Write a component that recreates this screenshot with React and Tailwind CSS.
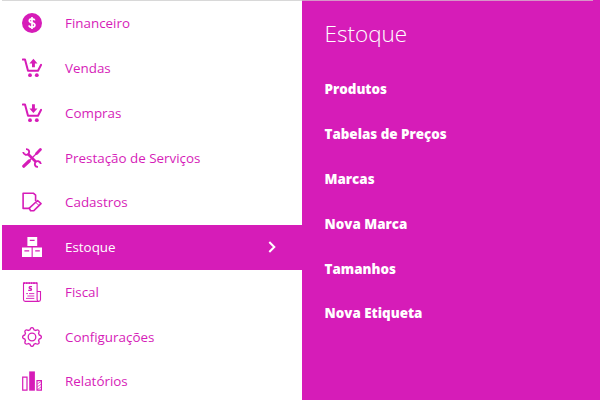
import React from 'react';

const FinanceIcon = () => (
    <svg width="20" height="20" viewBox="0 0 20 20" fill="none">
        <circle cx="10" cy="10" r="10" fill="currentColor" />
        <path d="M12.8 7.4C12.5 6.3 11.5 5.8 10 5.8C8.4 5.8 7.3 6.5 7.3 7.8C7.3 10.6 12.9 9.1 12.9 12C12.9 13.4 11.7 14.2 10 14.2C8.3 14.2 7.2 13.5 7 12.3M10 4V16" stroke="white" strokeWidth="1.7" />
    </svg>
);

const CartBase = ({ children }) => (
    <svg width="20" height="20" viewBox="0 0 20 20" fill="none">
        <path d="M0.8 1.5H3L6 12.8H16L19.1 6.8" stroke="currentColor" strokeWidth="2" strokeLinejoin="round" strokeLinecap="round" />
        <circle cx="8" cy="17.2" r="1.9" fill="currentColor" />
        <circle cx="14.8" cy="17.2" r="1.9" fill="currentColor" />
        {children}
    </svg>
);

const SalesIcon = () => (
    <CartBase>
        <path d="M11.4 0.8L15.5 5.5H12.9V9.3H10V5.5H7.4Z" fill="currentColor" />
    </CartBase>
);

const PurchasesIcon = () => (
    <CartBase>
        <path d="M11.4 10L7.4 5.5H10V1.3H12.9V5.5H15.5Z" fill="currentColor" />
    </CartBase>
);

const ToolsIcon = () => (
    <svg width="20" height="20" viewBox="0 0 20 20" fill="none" stroke="currentColor">
        <path d="M1.8 18.2L7.2 13" strokeWidth="3.2" strokeLinecap="round" />
        <path d="M7 13L16 4" strokeWidth="1.3" />
        <path d="M14.6 5.4L18.4 1.6" strokeWidth="2.8" strokeLinecap="round" />
        <path d="M6 6L14 14" strokeWidth="2.6" />
        <path d="M4 1.1C6.8 1 7.9 3.5 6.7 5.6C5.4 7.7 1.6 7.2 1.2 4" strokeWidth="1.9" />
        <path d="M16 18.9C13.2 19 12.1 16.5 13.3 14.4C14.6 12.3 18.4 12.8 18.8 16" strokeWidth="1.9" />
    </svg>
);

const RecordsIcon = () => (
    <svg width="20" height="20" viewBox="0 0 20 20" fill="none" stroke="currentColor" strokeWidth="1.6" strokeLinejoin="round">
        <path d="M7.5 16.4H1.1V1.2H11.3L13.6 3.2V8.9" />
        <path d="M15.6 8.5L19 11.7L11.6 18.8H8.6L7.3 16.2Z" />
        <path d="M13.7 10.4L17.1 13.5" strokeWidth="0.9" />
    </svg>
);

const StockIcon = () => (
    <svg width="20" height="20" viewBox="0 0 20 20" fill="none">
        <path d="M5.4 0H15.2V9H5.4ZM0 10.6H9.6V20H0ZM10.7 10.6H20.3V20H10.7Z" fill="currentColor" />
        <path d="M7.8 3.4H12.6M2.4 13.8H7.2M13.2 13.8H17.8" stroke="#d61cb8" strokeWidth="1.2" />
    </svg>
);

const FiscalIcon = () => (
    <svg width="20" height="20" viewBox="0 0 20 20" fill="none" stroke="currentColor">
        <path d="M17 19.4H3.2C2 19.4 1.5 18.6 1.5 17.5V1H15.1V17.6C15.1 20 18.5 20 18.5 17.6V9.5H15.1" strokeWidth="1.1" />
        <path d="M1.5 1.1H15.1" strokeWidth="1.8" strokeDasharray="1.8 0.6" />
        <path d="M10 4.7H8.4C6.8 4.7 6.8 6.4 8.2 6.5C10 6.7 9.9 8.4 8.3 8.4H6.2" strokeWidth="1.3" />
        <path d="M4.2 11.6H6M7 11.6H12.3M5.4 14H12.3M4 16.4H12.3" strokeWidth="0.9" />
    </svg>
);

const SettingsIcon = () => (
    <svg width="20" height="20" viewBox="0 0 20 20" fill="none" stroke="currentColor" strokeWidth="1.3" strokeLinejoin="round">
        <path d="M8 2.8C8.5 -0.1 11.5 -0.1 12 2.8Q12.9 3.1 13.7 3.5C16.1 1.9 18.1 3.9 16.5 6.3Q16.9 7.1 17.2 8C20.1 8.5 20.1 11.5 17.2 12Q16.9 12.9 16.5 13.7C18.1 16.1 16.1 18.1 13.7 16.5Q12.9 16.9 12 17.2C11.5 20.1 8.5 20.1 8 17.2Q7.1 16.9 6.3 16.5C3.9 18.1 1.9 16.1 3.5 13.7Q3.1 12.9 2.8 12C-0.1 11.5 -0.1 8.5 2.8 8Q3.1 7.1 3.5 6.3C1.9 3.9 3.9 1.9 6.3 3.5Q7.1 3.1 8 2.8Z" />
        <circle cx="10" cy="10" r="3.8" />
    </svg>
);

const ReportsIcon = () => (
    <svg width="20" height="20" viewBox="0 0 20 20" fill="none" stroke="currentColor">
        <path d="M0.7 6.1H5V19.1H0.7Z" strokeWidth="1.2" />
        <path d="M7.2 0.4H12.9V19.7H7.2Z" fill="currentColor" stroke="none" />
        <path d="M15 9.6H19.4V19.1H15Z" strokeWidth="1.2" />
        <path d="M15.3 13L19 10.5M15.3 15.8L19 13.3M15.3 18.6L19 16" strokeWidth="0.7" />
    </svg>
);

const menu = [
    { title: 'Financeiro', icon: <FinanceIcon /> },
    { title: 'Vendas', icon: <SalesIcon /> },
    { title: 'Compras', icon: <PurchasesIcon /> },
    { title: 'Prestação de Serviços', icon: <ToolsIcon /> },
    { title: 'Cadastros', icon: <RecordsIcon /> },
    { title: 'Estoque', icon: <StockIcon />, active: true },
    { title: 'Fiscal', icon: <FiscalIcon /> },
    { title: 'Configurações', icon: <SettingsIcon /> },
    { title: 'Relatórios', icon: <ReportsIcon /> }
];

const submenu = ['Produtos', 'Tabelas de Preços', 'Marcas', 'Nova Marca', 'Tamanhos', 'Nova Etiqueta'];

const App = () => {
    return (
        <div className="flex h-[400px] w-[600px] flex-col overflow-hidden bg-white font-['Open_Sans',sans-serif]">
            <div className="flex h-px shrink-0">
                <div className="ml-0.5 w-[300px] bg-[#d8d8d8]"></div>
                <div className="w-[291px] bg-[#d795c8]"></div>
                <div className="flex-1 bg-[#d61cb8]"></div>
            </div>
            <div className="flex min-h-0 flex-1">
                <nav className="w-[302px] shrink-0 pl-0.5">
                    {menu.map((item) => (
                        <a
                            key={item.title}
                            className={`flex h-[44.75px] items-center pl-5 text-[13.4px] ${item.active ? 'bg-[#d61cb8] text-white' : 'text-[#d61cb8]'}`}
                        >
                            {item.icon}
                            <span className="ml-[23px] flex-1">{item.title}</span>
                            {item.active && (
                                <svg className="mr-[26px]" width="8" height="12" viewBox="0 0 8 12" fill="none">
                                    <path d="M1.3 1L6.3 6L1.3 11" stroke="currentColor" strokeWidth="2" />
                                </svg>
                            )}
                        </a>
                    ))}
                </nav>
                <section className="flex-1 bg-[#d61cb8] pt-[17px] pl-[22.5px] text-white">
                    <h2 className="text-[22.5px] leading-8 font-light">Estoque</h2>
                    <ul className="mt-[17px]">
                        {submenu.map((title) => (
                            <li key={title} className="flex h-[44.8px] items-center text-[13.4px] font-extrabold">
                                {title}
                            </li>
                        ))}
                    </ul>
                </section>
            </div>
        </div>
    );
};

export default App;
